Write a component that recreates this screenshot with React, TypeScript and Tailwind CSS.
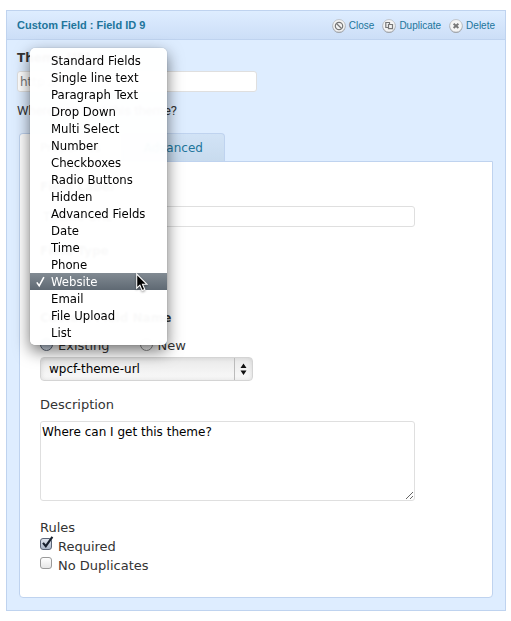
import { useState } from "react";
import type { ReactNode } from "react";

const FIELD_TYPES = [
  "Standard Fields",
  "Single line text",
  "Paragraph Text",
  "Drop Down",
  "Multi Select",
  "Number",
  "Checkboxes",
  "Radio Buttons",
  "Hidden",
  "Advanced Fields",
  "Date",
  "Time",
  "Phone",
  "Website",
  "Email",
  "File Upload",
  "List",
];

const ACTIONS = [
  {
    label: "Close",
    glyph: (
      <>
        <circle cx="7" cy="7" r="3.7" />
        <path d="M4.5 4.5l5 5" />
      </>
    ),
  },
  {
    label: "Duplicate",
    glyph: (
      <>
        <path d="M6.2 8.5H3.8v-5h3.7v1.8" />
        <path d="M6.5 5.5h4v4.2h-4z" />
      </>
    ),
  },
  {
    label: "Delete",
    glyph: <path strokeWidth="1.9" d="M4.6 4.8l4.8 4.2M9.4 4.8L4.6 9" />,
  },
];

function ActionIcon({ children }: { children: ReactNode }) {
  return (
    <svg className="size-3.5" viewBox="0 0 14 14" fill="none" aria-hidden="true">
      <circle cx="7" cy="7.4" r="6.5" fill="#8f9296" />
      <circle cx="7" cy="6.8" r="6.3" fill="#f4f4f4" stroke="#b9bcc1" strokeWidth="0.8" />
      <g stroke="#777" strokeWidth="1.2">
        {children}
      </g>
    </svg>
  );
}

function Header() {
  return (
    <header className="flex h-[29px] items-center justify-between border-b border-[#bfd3ef] bg-linear-to-b from-[#deedff] to-[#ccdef7] px-2.5 font-['Liberation_Sans',Arial,sans-serif] text-[11px] text-[#21759b]">
      <h1 className="font-bold">Custom Field : Field ID 9</h1>
      <nav className="flex gap-2 pt-0.5 text-[10px]">
        {ACTIONS.map((action) => (
          <a key={action.label} href="#" className="flex items-center gap-[3px]">
            <ActionIcon>{action.glyph}</ActionIcon>
            {action.label}
          </a>
        ))}
      </nav>
    </header>
  );
}

function TypeMenu({ value, onChange }: { value: string; onChange: (type: string) => void }) {
  return (
    <ul
      role="listbox"
      aria-label="Field Type"
      className="absolute -top-[223px] -left-2.5 z-10 w-[137px] rounded-[5px] bg-white/97 py-1 font-['DejaVu_Sans_Condensed','DejaVu_Sans',sans-serif] text-[13px] text-black shadow-[0_6px_16px_rgba(0,0,0,0.55),0_0_1px_rgba(0,0,0,0.4)] backdrop-blur-[1px]"
    >
      {FIELD_TYPES.map((type) => (
        <li key={type} role="presentation">
          <button
            type="button"
            role="option"
            aria-selected={type === value}
            onClick={() => onChange(type)}
            className="flex h-[17px] w-full items-center pl-[21px] text-left aria-selected:bg-linear-to-b aria-selected:from-[#828b93] aria-selected:to-[#5f6973] aria-selected:pl-1.5 aria-selected:text-white"
          >
            {type === value && (
              <svg className="mr-1.5 h-3 w-[9px]" viewBox="0 0 9 12" fill="none" stroke="currentColor" aria-hidden="true">
                <path d="M.8 6.4l2.4 3.4L7.9 1.2" strokeWidth="1.6" />
              </svg>
            )}
            {type}
          </button>
        </li>
      ))}
    </ul>
  );
}

function Pointer() {
  return (
    <svg className="pointer-events-none absolute top-0.5 left-24 z-20 h-[19px] w-3 drop-shadow-[0_1px_1px_rgba(0,0,0,0.4)]" viewBox="0 0 12 19" aria-hidden="true">
      <path d="M.7 1v14.2l3.2-3 2.3 5.4 2.6-1.1-2.3-5.2H11z" fill="#000" stroke="#fff" strokeWidth="1.1" />
    </svg>
  );
}

const boxClass = "rounded-[3px] border border-[#dfdfdf] bg-white";

function Check({ label, checked = false }: { label: string; checked?: boolean }) {
  return (
    <label className="flex h-[19px] gap-1.5">
      <span className="relative size-3">
        <input
          type="checkbox"
          defaultChecked={checked}
          className="peer block size-3 appearance-none rounded-[3px] border border-[#9a9a9a] bg-linear-to-b from-white to-[#e6e6e6] checked:border-[#5b6577] checked:from-[#dfe5ee] checked:to-[#aab6c8]"
        />
        <svg className="pointer-events-none absolute -top-0.5 left-0 hidden h-3.5 w-3.5 peer-checked:block" viewBox="0 0 14 14" fill="none" stroke="#17202e" aria-hidden="true">
          <path d="M3 6.8l2.8 3.4L12.4.8" strokeWidth="2.1" />
        </svg>
      </span>
      <span className="pt-px">{label}</span>
    </label>
  );
}

function Radio({ label, checked = false }: { label: string; checked?: boolean }) {
  return (
    <label className="flex gap-[5px]">
      <input
        type="radio"
        name="source"
        defaultChecked={checked}
        className="size-[13px] appearance-none rounded-full border border-[#8c8c8c] bg-linear-to-b from-[#f4f4f4] to-white checked:border-[#5b6577] checked:from-[#9fb0c6] checked:to-[#dbe4f0]"
      />
      {label}
    </label>
  );
}

export default function App() {
  const [type, setType] = useState("Website");

  return (
    <main className="pt-2.5 pr-[5px] pb-2.5 pl-1.5 font-['DejaVu_Sans',Verdana,sans-serif] text-[13px] leading-4 text-[#333]">
      <section className="border border-[#bfd3ef] bg-[#deedff]">
        <Header />
        <div className="px-2.5 pt-2.5 pb-3 text-[12px]">
          <label htmlFor="preview" className="block font-bold">
            Theme URL *
          </label>
          <input id="preview" defaultValue="http://" className={`${boxClass} mt-[5px] block h-[21px] w-60 px-0.5 text-[#777]`} />
          <p className="mt-[11px] font-['Roboto','Noto_Sans',sans-serif] text-[13px]">Where can I get this theme?</p>

          <div className="mx-0.5 mt-3.5">
            <div role="tablist" className="flex h-7 text-[#21759b]">
              <button type="button" role="tab" aria-selected="true" className="-mb-px rounded-t-[4px] border border-b-0 border-[#bfd3ef] bg-white px-5 text-[#333]">
                Properties
              </button>
              <button type="button" role="tab" aria-selected="false" className="rounded-t-[4px] border border-b-0 border-[#bfd3ef] bg-linear-to-b from-[#d2e3f6] to-[#c8dbee] px-[21px]">
                Advanced
              </button>
            </div>

            <div className="rounded-b-[4px] border border-[#bfd3ef] bg-white px-5 pt-[17px] pb-[21px] text-[13px]">
              <label htmlFor="label" className="block text-[12px] font-bold">
                Field Label
              </label>
              <input id="label" defaultValue="Theme URL" className={`${boxClass} mt-[11px] block h-[21px] w-full max-w-[375px] px-0.5 text-[12px] text-black`} />

              <label htmlFor="type" className="mt-4 block text-[12px] font-bold">
                Field Type
              </label>
              <div className="relative mt-3 w-28">
                <select
                  id="type"
                  value={type}
                  onChange={(e) => setType(e.target.value)}
                  className="block h-[21px] w-full appearance-none rounded border border-[#ccc] bg-white px-2 text-[12px] text-black"
                >
                  {FIELD_TYPES.map((option) => (
                    <option key={option}>{option}</option>
                  ))}
                </select>
                <TypeMenu value={type} onChange={setType} />
                <Pointer />
              </div>

              <fieldset className="mt-[18px]">
                <legend className="text-[12px] font-bold">Custom Field Name</legend>
                <div className="mt-3 flex h-4 gap-[30px]">
                  <Radio label="Existing" checked />
                  <Radio label="New" />
                </div>
              </fieldset>
              <div className="relative mt-[3px] w-[213px]">
                <select
                  aria-label="Existing field name"
                  className="block h-6 w-full appearance-none rounded-[4px] border border-[#d4d4d4] bg-linear-to-b from-[#e9e9e9] to-[#fafafa] pl-2 text-[12px] text-black shadow-[inset_0_0_5px_rgba(0,0,0,0.12)]"
                >
                  <option>wpcf-theme-url</option>
                </select>
                <svg className="pointer-events-none absolute top-0 right-0 h-6 w-[19px]" viewBox="0 0 19 24" aria-hidden="true">
                  <path d="M.5 1v22" stroke="#bbb" />
                  <path d="M6.5 11l3-4.5 3 4.5zM6.5 13.5l3 4.5 3-4.5z" fill="#111" />
                </svg>
              </div>

              <label htmlFor="description" className="mt-4 block">
                Description
              </label>
              <textarea
                id="description"
                defaultValue="Where can I get this theme?"
                className={`${boxClass} mt-2 block h-20 w-full max-w-[375px] px-px py-0.5 text-[12px] text-black`}
              />

              <fieldset className="mt-[19px]">
                <legend>Rules</legend>
                <div className="pt-0.5">
                  <Check label="Required" checked />
                  <Check label="No Duplicates" />
                </div>
              </fieldset>
            </div>
          </div>
        </div>
      </section>
    </main>
  );
}
